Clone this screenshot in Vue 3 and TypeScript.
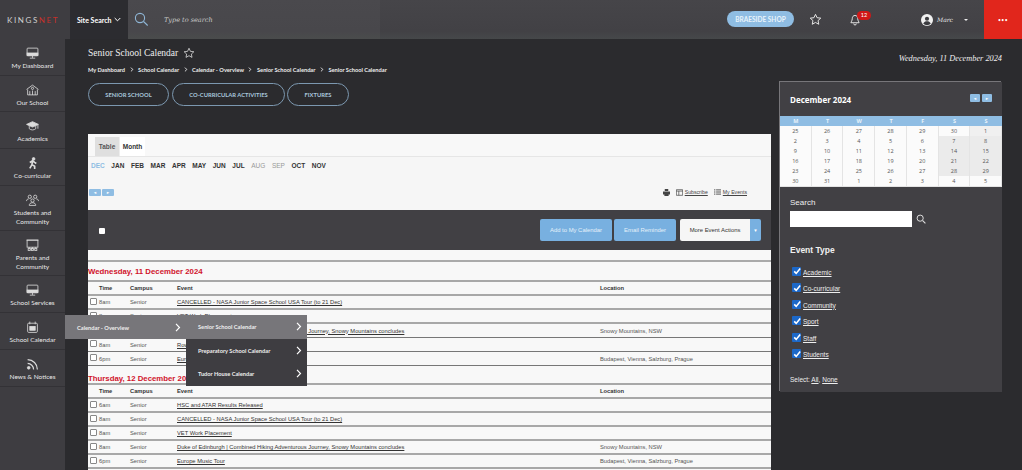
<script setup lang="ts">
interface NavItem { label: string[]; icon: string; h: number }
const nav: NavItem[] = [
  { label: ['My Dashboard'], icon: 'monitor', h: 37 },
  { label: ['Our School'], icon: 'school', h: 36 },
  { label: ['Academics'], icon: 'cap', h: 37 },
  { label: ['Co-curricular'], icon: 'runner', h: 37 },
  { label: ['Students and', 'Community'], icon: 'people', h: 45 },
  { label: ['Parents and', 'Community'], icon: 'board', h: 45 },
  { label: ['School Services'], icon: 'monitor', h: 37 },
  { label: ['School Calendar'], icon: 'calendar', h: 37 },
  { label: ['News & Notices'], icon: 'rss', h: 37 },
]
const crumbs = ['My Dashboard', 'School Calendar', 'Calendar - Overview', 'Senior School Calendar', 'Senior School Calendar']
const pills = ['SENIOR SCHOOL', 'CO-CURRICULAR ACTIVITIES', 'FIXTURES']
const months = [
  { m: 'DEC', c: 'cur' }, { m: 'JAN', c: '' }, { m: 'FEB', c: '' }, { m: 'MAR', c: '' }, { m: 'APR', c: '' }, { m: 'MAY', c: '' },
  { m: 'JUN', c: '' }, { m: 'JUL', c: '' }, { m: 'AUG', c: 'off' }, { m: 'SEP', c: 'off' }, { m: 'OCT', c: '' }, { m: 'NOV', c: '' },
]
interface Ev { time: string; event: string; loc: string; thin?: boolean }
const duke = 'Duke of Edinburgh | Combined Hiking Adventurous Journey, Snowy Mountains concludes'
const nasa = 'CANCELLED - NASA Junior Space School USA Tour (to 21 Dec)'
const wed: Ev[] = [
  { time: '8am', event: nasa, loc: '' },
  { time: '8am', event: 'VET Work Placement', loc: '' },
  { time: '8am', event: duke, loc: 'Snowy Mountains, NSW', thin: true },
  { time: '8am', event: 'Rowing Camp', loc: '', thin: true },
  { time: '6pm', event: 'Europe Music Tour', loc: 'Budapest, Vienna, Salzburg, Prague', thin: true },
]
const thu: Ev[] = [
  { time: '6am', event: 'HSC and ATAR Results Released', loc: '' },
  { time: '8am', event: nasa, loc: '' },
  { time: '8am', event: 'VET Work Placement', loc: '' },
  { time: '8am', event: duke, loc: 'Snowy Mountains, NSW' },
  { time: '6pm', event: 'Europe Music Tour', loc: 'Budapest, Vienna, Salzburg, Prague' },
]
const days = [
  { title: 'Wednesday, 11 December 2024', rows: wed },
  { title: 'Thursday, 12 December 2024', rows: thu },
]
const dow = ['M', 'T', 'W', 'T', 'F', 'S', 'S']
const weeks = [
  [25, 26, 27, 28, 29, 30, 1], [2, 3, 4, 5, 6, 7, 8], [9, 10, 11, 12, 13, 14, 15],
  [16, 17, 18, 19, 20, 21, 22], [23, 24, 25, 26, 27, 28, 29], [30, 31, 1, 2, 3, 4, 5],
]
const types = ['Academic', 'Co-curricular', 'Community', 'Sport', 'Staff', 'Students']
const subMenu = ['Senior School Calendar', 'Preparatory School Calendar', 'Tudor House Calendar']
</script>

<template>
  <div class="app">
    <header class="top">
      <div class="logo"><span class="kings">KINGS</span><span class="net">NET</span></div>
      <div class="site">Site Search
        <svg width="7" height="5" viewBox="0 0 7 5"><path d="M.7 1l2.800 2.800L6.300 1" fill="none" stroke="#fff" stroke-width="1"/></svg>
      </div>
      <div class="searchbox">
        <svg class="mag" width="15" height="15" viewBox="0 0 15 15"><circle cx="6" cy="6" r="4.600" fill="none" stroke="#8fb6d6" stroke-width="1.100"/><path d="M9.500 9.500l4.200 4" stroke="#8fb6d6" stroke-width="1.100"/></svg>
        <span class="type">Type to search</span>
      </div>
      <div class="topright">
        <span class="shop">BRAESIDE SHOP</span>
        <svg class="tstar" width="13" height="13" viewBox="0 0 24 24"><path d="M12 2.500l2.900 6.200 6.800.8-5 4.600 1.300 6.700-6-3.400-6 3.400 1.300-6.700-5-4.600 6.800-.8z" fill="none" stroke="#e8e8e8" stroke-width="1.800"/></svg>
        <span class="bell">
          <svg width="10" height="12" viewBox="0 0 22 24"><path d="M11 2c-4 0-6 3-6 7 0 5-3 7-3 9h18c0-2-3-4-3-9 0-4-2-7-6-7zM8 20c0 2 1.500 3 3 3s3-1 3-3" fill="none" stroke="#eee" stroke-width="2"/></svg>
          <i class="badge">12</i>
        </span>
        <span class="user">
          <svg width="12" height="12" viewBox="0 0 24 24"><circle cx="12" cy="12" r="12" fill="#f1f1f1"/><circle cx="12" cy="9.500" r="4.200" fill="#3c3c40"/><path d="M4.500 19.500c1.500-4 4.500-5 7.500-5s6 1 7.500 5a11 11 0 0 1-15 0z" fill="#3c3c40"/></svg>
          <em>Marc</em><b class="caret"></b>
        </span>
      </div>
      <div class="dots">•••</div>
    </header>

    <div class="body">
      <nav class="side">
        <a v-for="(n, i) in nav" :key="i" class="nitem" :style="{ height: n.h + 'px' }">
          <svg class="nicon" width="13" height="12" viewBox="0 0 24 22" fill="none" stroke="#dcdcdc" stroke-width="1.500">
            <template v-if="n.icon === 'monitor'"><rect x="2" y="2" width="20" height="14" rx="1.500"/><rect x="2" y="11" width="20" height="5" fill="#dcdcdc"/><path d="M12 16v4M7 20.500h10"/></template>
            <template v-else-if="n.icon === 'school'"><path d="M1 10l11-8 11 8M3 10v10h18V10M7 20v-7M12 20v-8M17 20v-7"/><circle cx="12" cy="8" r="2"/></template>
            <template v-else-if="n.icon === 'cap'"><path d="M1 8l11-5 11 5-11 5z" fill="#dcdcdc"/><path d="M6 11v5c3 3 9 3 12 0v-5M22 9v7"/></template>
            <template v-else-if="n.icon === 'runner'"><circle cx="14" cy="3.500" r="2.500" fill="#dcdcdc"/><path d="M7 10l5-3 4 3 3 2M12 7l-1 7 5 3v5M11 14l-4 7" stroke-width="3"/></template>
            <template v-else-if="n.icon === 'people'"><circle cx="7" cy="5" r="3"/><circle cx="17" cy="5" r="3"/><circle cx="12" cy="12" r="3"/><path d="M1 13c0-3 2-4 4-4M23 13c0-3-2-4-4-4M6 21c0-3 2-5 6-5s6 2 6 5z"/></template>
            <template v-else-if="n.icon === 'board'"><rect x="2" y="2" width="20" height="13"/><path d="M1 2h22M6 19v-4M12 19v-4M18 19v-4" /><rect x="4" y="17" width="4" height="4"/><rect x="10" y="17" width="4" height="4"/><rect x="16" y="17" width="4" height="4"/></template>
            <template v-else-if="n.icon === 'calendar'"><rect x="3" y="4" width="18" height="17" rx="2"/><path d="M7 1v5M17 1v5"/><rect x="7" y="10" width="10" height="7" fill="#dcdcdc"/></template>
            <template v-else><circle cx="5" cy="18" r="2.500" fill="#dcdcdc"/><path d="M3 10c6 0 11 5 11 11M3 3c10 0 18 8 18 18" stroke-width="2.200"/></template>
          </svg>
          <span v-for="l in n.label" :key="l" class="nlabel">{{ l }}</span>
        </a>
      </nav>

      <main class="main">
        <div class="headrow">
          <div>
            <h1 class="title">Senior School Calendar
              <svg width="12" height="12" viewBox="0 0 24 24"><path d="M12 2.500l2.900 6.200 6.800.8-5 4.600 1.300 6.700-6-3.400-6 3.400 1.300-6.700-5-4.600 6.800-.8z" fill="none" stroke="#dcdcdc" stroke-width="1.600"/></svg>
            </h1>
            <div class="crumbs">
              <template v-for="(c, i) in crumbs" :key="i">
                <span>{{ c }}</span>
                <svg v-if="i < crumbs.length - 1" width="4" height="5" viewBox="0 0 4 6"><path d="M.7.7L3 3 .7 5.300" fill="none" stroke="#fff" stroke-width="1"/></svg>
              </template>
            </div>
          </div>
          <div class="today">Wednesday, 11 December 2024</div>
        </div>

        <div class="columns">
          <div class="left">
            <div class="pills"><span v-for="p in pills" :key="p" class="pill">{{ p }}</span></div>
            <section class="panel">
              <div class="tabs"><span class="tab sel">Table</span><span class="tab">Month</span></div>
              <div class="months"><span v-for="m in months" :key="m.m" :class="m.c">{{ m.m }}</span></div>
              <div class="tools">
                <div class="arrows"><span>◄</span><span>►</span></div>
                <div class="links">
                  <svg width="7" height="7" viewBox="0 0 10 10"><path d="M2.500 0h5v3h-5zM0 3.500h10V8H8v2H2V8H0z" fill="#444"/></svg>
                  <svg class="l2" width="7" height="7" viewBox="0 0 10 10"><path d="M.5 1h9v8h-9zM.5 3h9M4 3v6" fill="none" stroke="#444"/></svg>
                  <u>Subscribe</u>
                  <svg class="l2" width="7" height="6" viewBox="0 0 10 8"><path d="M0 1h2M3 1h7M0 4h2M3 4h7M0 7h2M3 7h7" stroke="#444" stroke-width="1.300"/></svg>
                  <u>My Events</u>
                </div>
              </div>
              <div class="band">
                <input class="bandcheck" type="checkbox" />
                <div class="btns">
                  <span class="btn blue">Add to My Calendar</span>
                  <span class="btn blue">Email Reminder</span>
                  <span class="btn split"><span class="more">More Event Actions</span><span class="drop">▼</span></span>
                </div>
              </div>
              <div class="schedule">
                <div class="rule"></div>
                <div v-for="d in days" :key="d.title" class="day">
                  <h2 class="dayhead">{{ d.title }}</h2>
                  <table class="tbl">
                    <thead><tr><th class="c0"></th><th class="c1">Time</th><th class="c2">Campus</th><th class="c3">Event</th><th class="c4">Location</th></tr></thead>
                    <tbody>
                      <tr v-for="(r, i) in d.rows" :key="i" :class="{ thin: r.thin }">
                        <td class="c0"><span class="box"></span></td>
                        <td class="c1">{{ r.time }}</td>
                        <td class="c2">Senior</td>
                        <td class="c3"><u>{{ r.event }}</u></td>
                        <td class="c4">{{ r.loc }}</td>
                      </tr>
                    </tbody>
                  </table>
                </div>
              </div>
            </section>
          </div>

          <aside class="widget">
            <div class="whead">
              <span>December 2024</span>
              <div class="warrows"><i>◄</i><i>►</i></div>
            </div>
            <div class="cal">
              <div class="dow"><span v-for="(d, i) in dow" :key="i">{{ d }}</span></div>
              <div v-for="(w, wi) in weeks" :key="wi" class="week">
                <span v-for="(n, di) in w" :key="di" :class="{ wk: di >= 5 && wi > 0 && wi < 5, wk1: wi === 0 && di === 6 }">{{ n }}</span>
              </div>
            </div>
            <div class="filters">
              <div class="flabel">Search</div>
              <div class="frow">
                <div class="finput"></div>
                <svg width="10" height="10" viewBox="0 0 12 12"><circle cx="5" cy="5" r="3.700" fill="none" stroke="#ddd" stroke-width="1.200"/><path d="M8 8l3.300 3.300" stroke="#ddd" stroke-width="1.400"/></svg>
              </div>
              <h3 class="ftitle">Event Type</h3>
              <div v-for="t in types" :key="t" class="ftype">
                <span class="chk"><svg width="8" height="8" viewBox="0 0 10 10"><path d="M1.500 5.500l2.500 2.500 5-6" fill="none" stroke="#fff" stroke-width="2"/></svg></span>
                <u>{{ t }}</u>
              </div>
              <div class="select">Select: <u>All</u>, <u>None</u></div>
            </div>
          </aside>
        </div>
      </main>

      <div class="flyout">
        <div class="fly1"><span>Calendar - Overview</span><svg width="6" height="9" viewBox="0 0 6 9"><path d="M1 .8L4.500 4.500 1 8.200" fill="none" stroke="#fff" stroke-width="1.200"/></svg></div>
        <div class="fly2">
          <div v-for="(s, i) in subMenu" :key="s" class="flyrow" :class="{ on: i === 0 }">
            <span>{{ s }}</span>
            <svg width="6" height="9" viewBox="0 0 6 9"><path d="M1 .8L4.500 4.500 1 8.200" fill="none" stroke="#fff" stroke-width="1.200"/></svg>
          </div>
        </div>
      </div>
    </div>
  </div>
</template>

<style>
html, body { margin: 0; background: #2b2b2e; overflow: hidden; }
</style>

<style scoped>
.app { width: 1022px; height: 470px; overflow: hidden; background: #2b2b2e; font-family: Lato, sans-serif; color: #fff; position: relative; }
u { text-decoration: underline; }

.top { height: 39px; display: flex; align-items: stretch; background: linear-gradient(#464549, #424145 80%, #46484a); }
.logo { width: 70px; box-sizing: border-box; padding-left: 7px; display: flex; align-items: center; font-size: 8px; letter-spacing: 1.600px; background: #3e3d41; }
.kings { color: #d0d0d0; }
.net { color: #c8302a; }
.site { width: 58px; box-sizing: border-box; padding-left: 7px; display: flex; align-items: center; gap: 2px; font-size: 7px; font-weight: 700; background: #2c2c30; white-space: nowrap; }
.searchbox { width: 252px; display: flex; align-items: center; padding-left: 6px; box-sizing: border-box; background: linear-gradient(#4a494d, #48474b 80%, #4a4c4c); }
.mag { margin-right: 15px; }
.type { font: italic 6.500px "DejaVu Serif", serif; color: #c8c8c8; }
.topright { flex: 1; position: relative; display: flex; align-items: center; padding-left: 347px; }
.shop { width: 67px; height: 16px; margin-top: -1px; border-radius: 8px; background: #8fbde3; color: #eaf4fb; font-size: 6.500px; font-weight: 700; display: flex; align-items: center; justify-content: center; white-space: nowrap; }
.tstar { margin-left: 15px; }
.bell { margin-left: 28px; position: relative; display: flex; }
.badge { position: absolute; left: 7px; top: -3px; width: 14px; height: 9px; border-radius: 5px; background: #d01818; font: 5.500px Lato, sans-serif; display: flex; align-items: center; justify-content: center; }
.user { margin-left: 61px; display: flex; align-items: center; gap: 4px; }
.user em { font: italic 6px "DejaVu Serif", serif; color: #eee; }
.caret { width: 0; height: 0; margin-left: 7px; border: 2px solid transparent; border-top-color: #eee; border-bottom: 0; }
.dots { width: 38px; background: #e1261c; display: flex; align-items: center; justify-content: center; font-size: 5px; letter-spacing: .5px; }

.body { display: flex; height: 431px; position: relative; }
.side { width: 65px; flex: none; background: #3e3d41; }
.nitem { display: flex; flex-direction: column; align-items: center; box-sizing: border-box; padding-top: 8px; border-bottom: 1px solid #333236; }
.nicon { margin-bottom: 1.500px; flex: none; }
.nlabel { font-size: 6.500px; line-height: 9px; color: #e8e8e8; white-space: nowrap; font-weight: 400; }

.main { flex: 1; padding: 8px 20px 0 23px; min-width: 0; }
.headrow { display: flex; justify-content: space-between; }
.title { margin: 0; font: 400 9.500px/12px "Liberation Serif", serif; color: #eee; display: flex; align-items: center; gap: 5px; white-space: nowrap; }
.crumbs { margin-top: 6px; display: flex; align-items: center; gap: 4.500px; font-size: 5.700px; font-weight: 700; color: #ececec; white-space: nowrap; height: 8px; }
.today { margin-top: 7px; font: italic 8.300px/10px "Liberation Serif", serif; color: #eee; }

.columns { display: flex; gap: 9px; align-items: flex-start; margin-top: 9px; }
.left { width: 683px; flex: none; }
.pills { display: flex; gap: 3px; height: 23px; margin-top: 1px; }
.pill { box-sizing: border-box; height: 23px; border: 1px solid #7c98b0; border-radius: 12px; display: flex; align-items: center; justify-content: center; font-size: 5.800px; font-weight: 700; color: #a9c6dc; }
.pill:nth-child(1) { width: 81px; }
.pill:nth-child(2) { width: 113px; }
.pill:nth-child(3) { width: 62px; margin-left: -1px; }

.panel { margin-top: 28px; background: #f6f6f6; color: #333; height: 340px; overflow: hidden; font-family: "Liberation Sans", Arial, sans-serif; }
.tabs { height: 23px; padding-left: 7px; display: flex; align-items: flex-end; border-bottom: 1px solid #e6e6e6; background: #f8f8f8; box-sizing: border-box; }
.tab { width: 25px; height: 19px; display: flex; align-items: center; justify-content: center; font-size: 6.500px; font-weight: 700; color: #333; background: #fff; }
.tab.sel { width: 24px; background: #dfdfdf; color: #555; border-right: 1px solid #eee; }
.months { display: flex; gap: 6.600px; padding: 5px 0 0 3px; font-size: 6.500px; font-weight: 700; height: 9px; color: #333; }
.months .cur { color: #8fbde3; }
.months .off { color: #999; font-weight: 400; }
.tools { display: flex; justify-content: space-between; align-items: center; height: 14px; margin-top: 14px; }
.arrows { display: flex; gap: 1px; padding-left: 1px; }
.arrows span { width: 12px; height: 7px; background: #8fbde3; color: #fff; font-size: 4px; display: flex; align-items: center; justify-content: center; border-radius: 1px; }
.links { display: flex; align-items: center; gap: 1.500px; padding-right: 24px; font-size: 5.200px; color: #444; }
.l2 { margin-left: 5px; }
.band { margin-top: 11px; height: 40px; background: #414044; display: flex; align-items: center; justify-content: space-between; padding: 0 10px 0 11px; }
.bandcheck { width: 6px; height: 6px; margin: 1px 0 0; appearance: none; background: #fff; border-radius: 1px; }
.btns { display: flex; gap: 2px; }
.btn { height: 22px; border-radius: 2px; display: flex; align-items: center; justify-content: center; font-size: 5.900px; }
.blue { background: #78b0e0; color: #e6f1fa; }
.blue:nth-child(1) { width: 72px; }
.blue:nth-child(2) { width: 62px; }
.split { margin-left: 2px; width: 81px; overflow: hidden; color: #333; }
.more { flex: 1; height: 100%; background: #f6f6f6; display: flex; align-items: center; justify-content: center; }
.drop { width: 11px; height: 100%; background: #78b0e0; color: #fff; font-size: 4.500px; display: flex; align-items: center; justify-content: center; }

.schedule { background: #f8f8f8; height: 230px; padding-top: 10px; }
.rule { height: 2px; background: #aaa; }
.day { padding-top: 5px; }
.day + .day { padding-top: 8px; }
.dayhead { margin: 0; font-size: 7.800px; line-height: 10px; height: 13px; color: #d0142c; white-space: nowrap; }
.day + .day .dayhead { height: 9px; }
.tbl { width: 683px; border-collapse: collapse; table-layout: fixed; font-size: 5.750px; }
.tbl th { height: 12px; padding: 0; text-align: left; font-size: 5.750px; color: #333; border-top: 2px solid #a8a8a8; border-bottom: 2px solid #a8a8a8; }
.tbl td { height: 12px; padding: 0; border-bottom: 2px solid #a8a8a8; color: #555; white-space: nowrap; }
.tbl tr.thin td { height: 13px; border-bottom: 1px solid #777; }
.tbl td.c3 { color: #333; }
.c0 { width: 11px; }
.c1 { width: 31px; }
.c2 { width: 47px; }
.c3 { width: 423px; }
.box { display: block; width: 5px; height: 5px; margin-left: 2px; border: 1px solid #888; border-radius: 1px; background: #fff; margin-top: -2px; }

.widget { width: 222px; height: 310px; flex: none; margin-top: 0; background: #414044; font-family: "Open Sans", sans-serif; box-shadow: -1px -1px 0 #77767a; }
.whead { height: 34px; display: flex; align-items: center; justify-content: space-between; padding: 0 10px; font-size: 8px; font-weight: 700; }
.warrows { display: flex; gap: 2px; margin-top: -2px; }
.warrows i { width: 10px; height: 8px; background: #8fbde3; color: #fff; font: 4px "Open Sans", sans-serif; display: flex; align-items: center; justify-content: center; border-radius: 1px; }
.cal { background: #fff; color: #555; }
.dow, .week { display: grid; grid-template-columns: repeat(7, 1fr); text-align: center; font-size: 5.500px; line-height: 10px; height: 10px; }
.dow { background: #8fbde3; color: #e8f2fa; font-weight: 700; }
.week span { border-right: 1px solid #e4e4e4; border-bottom: 1px solid #e4e4e4; box-sizing: border-box; background: #fbfbfb; }
.week .wk { background: #ebebeb; }
.week .wk1 { background: #f0f0f0; }
.filters { padding: 12px 0 0 10px; }
.flabel { font: 8px/10px "Liberation Sans", Arial, sans-serif; color: #eee; }
.frow { display: flex; align-items: center; gap: 4px; margin-top: 3px; }
.finput { width: 122px; height: 16px; background: #fff; }
.ftitle { margin: 18px 0 8px; font: 700 8.500px/11px "Liberation Sans", Arial, sans-serif; color: #f0f0f0; }
.ftype { height: 16.500px; display: flex; align-items: center; padding-left: 2px; gap: 2px; font: 6.500px "Liberation Sans", Arial, sans-serif; color: #eee; }
.chk { width: 9px; height: 9px; border-radius: 1px; background: #1c68c8; display: flex; align-items: center; justify-content: center; margin-top: -2px; }
.select { margin-top: 13px; font: 6.500px "Liberation Sans", Arial, sans-serif; color: #eee; }

.flyout { position: absolute; left: 65px; top: 276px; display: flex; font-family: Lato, sans-serif; font-size: 5.700px; font-weight: 700; color: #eee; }
.fly1 { width: 121px; height: 24px; background: #77767a; display: flex; align-items: center; justify-content: space-between; padding: 0 5px 0 12px; box-sizing: border-box; }
.fly2 { width: 121px; background: #3e3d41; }
.flyrow { height: 23.500px; display: flex; align-items: center; justify-content: space-between; padding: 0 5px 0 12px; box-sizing: border-box; }
.flyrow.on { background: #77767a; }
</style>
